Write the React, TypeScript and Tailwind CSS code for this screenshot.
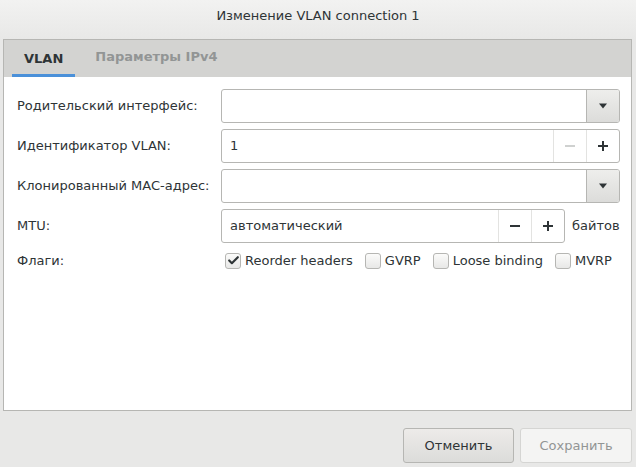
import { Check } from 'lucide-react';

const font = { fontFamily: '"DejaVu Sans", "Noto Sans", sans-serif' };

function Caret() {
  return (
    <svg width="10" height="6" viewBox="0 0 10 6" className="fill-[#2e3436]">
      <path d="M1 0.5 L9 0.5 L5 5.5 Z" />
    </svg>
  );
}

function ComboRow() {
  return (
    <div className="flex h-[34px] rounded-[3px] border border-[#b6b6b3] bg-white overflow-hidden">
      <div className="flex-1" />
      <div className="w-[33px] flex items-center justify-center border-l border-[#b6b6b3] bg-gradient-to-b from-[#eeeeec] to-[#dcdcda]">
        <Caret />
      </div>
    </div>
  );
}

function SpinButtons({ minusDisabled }: { minusDisabled?: boolean }) {
  return (
    <>
      <div
        className={`w-[33px] flex items-center justify-center border-l border-[#e3e3e1] ${
          minusDisabled ? 'text-[#cfd1d0]' : 'text-[#2e3436]'
        }`}
      >
        <svg width="12" height="12" viewBox="0 0 12 12">
          <path d="M1 6 H11" stroke="currentColor" strokeWidth="2" />
        </svg>
      </div>
      <div className="w-[33px] flex items-center justify-center border-l border-[#e3e3e1] text-[#2e3436]">
        <svg width="12" height="12" viewBox="0 0 12 12">
          <path d="M1 6 H11 M6 1 V11" stroke="currentColor" strokeWidth="2" />
        </svg>
      </div>
    </>
  );
}

function CheckBox({ label, checked }: { label: string; checked?: boolean }) {
  return (
    <label className="flex items-center gap-[4px] whitespace-nowrap">
      <span className="w-[16px] h-[16px] shrink-0 rounded-[3px] border border-[#b6b6b3] bg-gradient-to-b from-[#fbfbfa] to-[#e8e8e7] flex items-center justify-center">
        {checked && <Check size={13} strokeWidth={4} className="text-[#2e3436]" />}
      </span>
      <span>{label}</span>
    </label>
  );
}

export default function App() {
  return (
    <div style={font} className="w-[636px] h-[467px] bg-[#e8e8e7] text-[13px] text-[#2e3436] flex flex-col">
      <div className="h-[39px] flex items-start justify-center pt-[6px] bg-gradient-to-b from-[#f2f2f1] to-[#e8e8e7] text-[#2e3436]">
        Изменение VLAN connection 1
      </div>

      <div className="ml-[3px] mr-[4px] h-[372px] border border-[#b6b6b3] bg-white flex flex-col">
        <div className="h-[37px] bg-[#d3d3d1] flex items-stretch pl-[8px] font-bold">
          <div className="px-[12px] flex items-center border-b-[3px] border-[#4a90d9] pt-[3px] text-[#2e3436]">
            VLAN
          </div>
          <div className="ml-[8px] px-[12px] flex items-center pb-[3px] text-[#929595]">
            Параметры IPv4
          </div>
        </div>

        <div className="pt-[12px] pl-[13px] pr-[12px] grid grid-cols-[204px_1fr] gap-y-[6px] items-center">
          <div>Родительский интерфейс:</div>
          <ComboRow />

          <div>Идентификатор VLAN:</div>
          <div className="flex h-[34px] rounded-[3px] border border-[#b6b6b3] bg-white overflow-hidden">
            <div className="flex-1 flex items-center pl-[8px]">1</div>
            <SpinButtons minusDisabled />
          </div>

          <div>Клонированный MAC-адрес:</div>
          <ComboRow />

          <div>MTU:</div>
          <div className="flex items-center gap-[7px]">
            <div className="w-[344px] flex h-[34px] rounded-[3px] border border-[#b6b6b3] bg-white overflow-hidden">
              <div className="flex-1 flex items-center pl-[8px]">автоматический</div>
              <SpinButtons />
            </div>
            <span>байтов</span>
          </div>

          <div className="pt-[2px]">Флаги:</div>
          <div className="flex items-center gap-[12px] pl-[4px] pt-[2px]">
            <CheckBox label="Reorder headers" checked />
            <CheckBox label="GVRP" />
            <CheckBox label="Loose binding" />
            <CheckBox label="MVRP" />
          </div>
        </div>
      </div>

      <div className="flex justify-end gap-[6px] mr-[4px] mt-[17px]">
        <button className="w-[111px] h-[35px] rounded-[3px] border border-[#b6b6b3] bg-gradient-to-b from-[#edebe9] to-[#dcdcda] text-[#2e3436]">
          Отменить
        </button>
        <button className="w-[112px] h-[35px] rounded-[3px] border border-[#d5d5d3] bg-[#f4f4f3] text-[#929595]">
          Сохранить
        </button>
      </div>
    </div>
  );
}
